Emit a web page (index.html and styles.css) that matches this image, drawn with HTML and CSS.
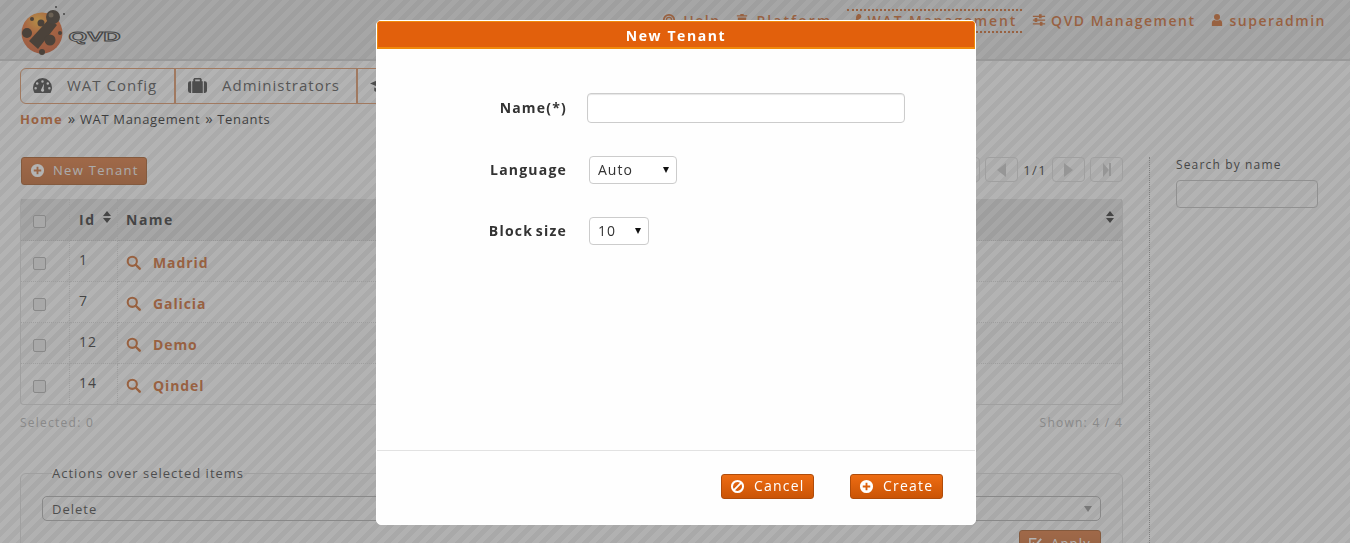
FILE: index.html
```html
<!DOCTYPE html>
<html lang="en">
<head>
  <meta charset="UTF-8" />
  <title>New Tenant</title>
  <link rel="stylesheet" href="styles.css">
</head>
<body>
  <svg class="sprites" xmlns="http://www.w3.org/2000/svg">
    <symbol id="i-plus" viewBox="0 0 16 16">
      <path fill-rule="evenodd" d="M8 1a7 7 0 1 0 0 14A7 7 0 0 0 8 1zM7 4h2v3h3v2H9v3H7V9H4V7h3z"/>
    </symbol>
    <symbol id="i-ban" viewBox="0 0 16 16">
      <path fill-rule="evenodd" d="M8 1a7 7 0 1 0 0 14A7 7 0 0 0 8 1zm0 2.200c1 0 1.900.3 2.600.8L4 10.600A4.800 4.800 0 0 1 8 3.200zm4 2.200A4.800 4.800 0 0 1 5.400 12z"/>
    </symbol>
    <symbol id="i-search" viewBox="0 0 16 16">
      <circle cx="6.700" cy="6.700" r="4.900" fill="none" stroke="currentColor" stroke-width="2.200"/>
      <path d="M10.400 10.400l4.200 4.200" stroke="currentColor" stroke-width="2.600" stroke-linecap="round"/>
    </symbol>
    <symbol id="i-sort" viewBox="0 0 10 14">
      <path d="M5 1l4 5H1zM1 8h8l-4 5z"/>
    </symbol>
    <symbol id="i-user" viewBox="0 0 14 16">
      <circle cx="7" cy="4.500" r="3.500"/>
      <path d="M1 15v-3.500C1 9.500 2.500 8 4 8c1 .8 5 .8 6 0 1.500 0 3 1.500 3 3.500V15z"/>
    </symbol>
    <symbol id="i-sliders" viewBox="0 0 16 16">
      <path d="M1 3h7V1.500h3V3h4v1.500h-4V6H8V4.500H1zM1 7.300h2V5.800h3v1.500h9v1.500H6v1.500H3V8.800H1zM1 11.600h8v-1.500h3v1.500h3v1.500h-3v1.500H9v-1.500H1z"/>
    </symbol>
    <symbol id="i-life" viewBox="0 0 16 16">
      <circle cx="8" cy="8" r="6" fill="none" stroke="currentColor" stroke-width="2"/>
      <circle cx="8" cy="8" r="3" fill="none" stroke="currentColor" stroke-width="1.500"/>
    </symbol>
    <symbol id="i-trash" viewBox="0 0 14 16">
      <path d="M5 1h4v1.500h4V4H1V2.500h4zM2 5h10l-.8 10H2.800z"/>
    </symbol>
    <symbol id="i-wrench" viewBox="0 0 12 16">
      <path d="M8 1c2 0 3 1.500 3 3S9.500 7 8 7L4 15H1.500L5 6.500C4.500 4 6 1 8 1z"/>
    </symbol>
    <symbol id="i-gauge" viewBox="0 0 18 16">
      <path fill-rule="evenodd" d="M9 1a9 9 0 0 0-9 9c0 1.800.5 3.500 1.400 5h15.200c.9-1.500 1.400-3.200 1.400-5a9 9 0 0 0-9-9zM9 3a1.200 1.200 0 1 1 0 2.400A1.200 1.200 0 0 1 9 3zM4 5a1.200 1.200 0 1 1 0 2.400A1.200 1.200 0 0 1 4 5zm10 0a1.200 1.200 0 1 1 0 2.400A1.200 1.200 0 0 1 14 5zM2.500 9.500a1.200 1.200 0 1 1 0 2.400 1.200 1.200 0 0 1 0-2.400zm13 0a1.200 1.200 0 1 1 0 2.400 1.200 1.200 0 0 1 0-2.400zM10.500 6L10 11.200a1.500 1.500 0 1 1-2 .1z"/>
    </symbol>
    <symbol id="i-case" viewBox="0 0 18 16">
      <path fill-rule="evenodd" d="M6 1h6l1 1v2h3a2 2 0 0 1 2 2v7a2 2 0 0 1-2 2H2a2 2 0 0 1-2-2V6a2 2 0 0 1 2-2h3V2zm.800 1.300V4h4.400V2.300zM3 4v11h1V4zm11 0v11h1V4z"/>
    </symbol>
    <symbol id="i-cap" viewBox="0 0 18 16">
      <path d="M9 2l9 4-9 4-9-4zM4 10l5 2 5-2v3c-2 2-8 2-10 0zM16 7.500h1V13h-1z"/>
    </symbol>
    <symbol id="i-edit" viewBox="0 0 16 16">
      <path fill="none" stroke="currentColor" stroke-width="1.500" d="M13 9v5H2V3h7"/>
      <path fill="none" stroke="currentColor" stroke-width="2" d="M5 7l3 3 6-7"/>
    </symbol>
  </svg>

  <div class="page">
    <header class="topbar">
      <svg class="logo" viewBox="0 0 104 46" xmlns="http://www.w3.org/2000/svg">
        <defs>
          <radialGradient id="bug" cx="0.4" cy="0.2" r="0.85">
            <stop offset="0" stop-color="#ffb428"/>
            <stop offset="0.4" stop-color="#e8641e"/>
            <stop offset="1" stop-color="#c84c1e"/>
          </radialGradient>
        </defs>
        <circle cx="22" cy="25" r="20.500" fill="url(#bug)"/>
        <path d="M29 11L9 33l9 8 19-24z" fill="#2e1c0c"/>
        <circle cx="33" cy="9" r="7" fill="#2c2014"/>
        <circle cx="31" cy="7" r="2.500" fill="#6e5a40"/>
        <circle cx="7" cy="25" r="5" fill="#2e1c0c"/>
        <circle cx="21" cy="15" r="3.500" fill="#2e1c0c"/>
        <circle cx="12" cy="11" r="2" fill="#2e1c0c"/>
        <circle cx="30" cy="32" r="5.500" fill="#2e1c0c"/>
        <circle cx="40" cy="25" r="2" fill="#2e1c0c"/>
        <circle cx="22" cy="44" r="3" fill="#2e1c0c"/>
        <circle cx="36" cy="-1" r="1" fill="#222"/>
        <circle cx="44" cy="6" r="1" fill="#222"/>
        <text class="logo-text" x="48.500" y="33" textLength="52" lengthAdjust="spacingAndGlyphs">QVD</text>
      </svg>
      <nav class="topnav">
        <a class="topnav-item"><svg class="icon icon-help"><use href="#i-life"/></svg>Help</a>
        <a class="topnav-item topnav-wide"><svg class="icon icon-trash"><use href="#i-trash"/></svg>Platform</a>
        <a class="topnav-item topnav-current"><svg class="icon icon-thin"><use href="#i-wrench"/></svg>WAT Management</a>
        <a class="topnav-item"><svg class="icon"><use href="#i-sliders"/></svg>QVD Management</a>
        <a class="topnav-item"><svg class="icon icon-user"><use href="#i-user"/></svg>superadmin</a>
      </nav>
    </header>

    <div class="main">
      <div class="tabs">
        <a class="tab tab-config"><svg class="tab-icon"><use href="#i-gauge"/></svg>WAT Config</a>
        <a class="tab tab-admins"><svg class="tab-icon"><use href="#i-case"/></svg>Administrators</a>
        <a class="tab tab-roles"><svg class="tab-icon"><use href="#i-cap"/></svg>Roles</a>
      </div>
      <div class="breadcrumbs">
        <a class="crumb-home">Home</a><span class="crumb-sep">»</span>WAT Management<span class="crumb-sep">»</span>Tenants
      </div>

      <div class="columns">
        <section class="content">
          <div class="toolbar">
            <button class="btn btn-new"><svg class="btn-icon"><use href="#i-plus"/></svg>New Tenant</button>
            <div class="pager">
              <span class="page-btn"></span>
              <span class="page-btn"><span class="tri tri-left"></span></span>
              <span class="page-count">1/1</span>
              <span class="page-btn"><span class="tri tri-right"></span></span>
              <span class="page-btn"><span class="tri tri-right tri-small"></span><span class="bar"></span></span>
            </div>
          </div>

          <table class="list">
            <thead>
              <tr>
                <th class="col-check"><input type="checkbox" class="check"></th>
                <th class="col-id">Id <svg class="sort"><use href="#i-sort"/></svg></th>
                <th>Name</th>
                <th class="col-end"><svg class="sort"><use href="#i-sort"/></svg></th>
              </tr>
            </thead>
            <tbody>
              <tr>
                <td class="col-check"><input type="checkbox" class="check"></td>
                <td class="col-id"><span class="id">1</span></td>
                <td colspan="2"><a class="row-link"><svg class="row-icon"><use href="#i-search"/></svg>Madrid</a></td>
              </tr>
              <tr>
                <td class="col-check"><input type="checkbox" class="check"></td>
                <td class="col-id"><span class="id">7</span></td>
                <td colspan="2"><a class="row-link"><svg class="row-icon"><use href="#i-search"/></svg>Galicia</a></td>
              </tr>
              <tr>
                <td class="col-check"><input type="checkbox" class="check"></td>
                <td class="col-id"><span class="id">12</span></td>
                <td colspan="2"><a class="row-link"><svg class="row-icon"><use href="#i-search"/></svg>Demo</a></td>
              </tr>
              <tr>
                <td class="col-check"><input type="checkbox" class="check"></td>
                <td class="col-id"><span class="id">14</span></td>
                <td colspan="2"><a class="row-link"><svg class="row-icon"><use href="#i-search"/></svg>Qindel</a></td>
              </tr>
            </tbody>
          </table>

          <div class="list-foot">
            <span>Selected: 0</span>
            <span>Shown: 4 / 4</span>
          </div>

          <fieldset class="actions">
            <legend>Actions over selected items</legend>
            <div class="fake-select"><span>Delete</span><span class="fake-arrow"></span></div>
            <div class="actions-row">
              <button class="btn btn-apply"><svg class="btn-icon"><use href="#i-edit"/></svg>Apply</button>
            </div>
          </fieldset>
        </section>

        <aside class="side">
          <label class="side-label">Search by name</label>
          <input class="side-input" type="text">
        </aside>
      </div>
    </div>
  </div>

  <div class="overlay"></div>

  <div class="modal">
    <div class="modal-title">New Tenant</div>
    <form class="modal-body">
      <div class="form-row">
        <label class="form-label">Name(*)</label>
        <input class="name-input" type="text">
      </div>
      <div class="form-row">
        <label class="form-label">Language</label>
        <span class="select-wrap lang-select">
          <select class="form-select"><option>Auto</option></select>
        </span>
      </div>
      <div class="form-row">
        <label class="form-label">Block size</label>
        <span class="select-wrap size-select">
          <select class="form-select"><option>10</option></select>
        </span>
      </div>
    </form>
    <div class="modal-foot">
      <button class="btn btn-modal"><svg class="btn-icon"><use href="#i-ban"/></svg>Cancel</button>
      <button class="btn btn-modal"><svg class="btn-icon"><use href="#i-plus"/></svg>Create</button>
    </div>
  </div>
</body>
</html>
```
FILE: styles.css
```css
* {
  box-sizing: border-box;
}
html, body {
  margin: 0;
  padding: 0;
  height: 543px;
  overflow: hidden;
}
body {
  font-family: "Open Sans", sans-serif;
  font-size: 13px;
  letter-spacing: 1px;
  color: #222;
  background-color: #fff;
  background-image: repeating-linear-gradient(135deg, #fff 0, #fff 5px, #eee 5px, #eee 10px);
}
.sprites {
  display: none;
}
.page {
  height: 543px;
  overflow: hidden;
}

/* top bar */
.topbar {
  height: 61px;
  display: flex;
  justify-content: space-between;
  background-image: repeating-linear-gradient(135deg, #e4e4e4 0, #e4e4e4 5px, #d6d6d6 5px, #d6d6d6 10px);
  border-bottom: 2px solid #c8c8c8;
}
.logo {
  width: 104px;
  height: 46px;
  margin: 8px 0 0 20px;
  overflow: visible;
}
.logo-text {
  font-family: "Liberation Sans", sans-serif;
  font-size: 13px;
  font-weight: 700;
  letter-spacing: 0;
  fill: none;
  stroke: #222;
  stroke-width: 0.8;
}
.topnav {
  display: flex;
  align-items: flex-start;
  padding: 9px 24px 0 0;
}
.topnav-item {
  display: flex;
  align-items: center;
  height: 24px;
  padding-bottom: 2px;
  margin-left: 16px;
  font-size: 14px;
  font-weight: 600;
  letter-spacing: 1.5px;
  color: #c85a18;
  white-space: nowrap;
}
.topnav-wide {
  letter-spacing: 2.1px;
}
.topnav-current {
  padding: 0 5px 2px 4px;
  margin-left: 15px;
  margin-right: -6px;
  letter-spacing: 1.85px;
  border-top: 2px dotted #c85a18;
  border-bottom: 2px dotted #c85a18;
}
.icon {
  width: 14px;
  height: 14px;
  margin-right: 5px;
  fill: currentColor;
}
.icon-help {
  margin-right: 7px;
}
.icon-trash {
  width: 12px;
  margin-right: 8px;
}
.icon-thin {
  width: 12px;
  margin-right: 4px;
}
.icon-user {
  width: 12px;
  margin-right: 6px;
}

/* tabs and breadcrumbs */
.main {
  padding: 7px 0 0 20px;
}
.tabs {
  display: flex;
  width: 500px;
  height: 36px;
  border: 1px solid #d88a58;
  border-radius: 6px;
}
.tab {
  display: flex;
  align-items: center;
  padding-bottom: 2px;
  font-size: 15px;
  letter-spacing: 1px;
  color: #444;
  border-right: 2px solid #d88a58;
}
.tab-config {
  width: 155px;
  padding-left: 12px;
}
.tab-admins {
  width: 182px;
  padding-left: 12px;
}
.tab-roles {
  padding-left: 12px;
  border-right: 0;
}
.tab-icon {
  width: 19px;
  height: 17px;
  margin-right: 15px;
  fill: #333;
}
.breadcrumbs {
  margin-top: 6px;
  height: 18px;
  line-height: 18px;
  letter-spacing: 0.65px;
  color: #111;
}
.crumb-home {
  font-weight: 700;
  letter-spacing: 1.1px;
  color: #c85a18;
}
.crumb-sep {
  margin: 0 4px 0 5px;
  font-size: 15px;
  line-height: 15px;
}

/* columns */
.columns {
  display: flex;
  margin-top: 29px;
}
.content {
  width: 1103px;
}
.side {
  margin-left: 26px;
  width: 170px;
  height: 386px;
  padding-left: 26px;
  border-left: 1px dotted #999;
  display: flex;
  flex-direction: column;
}
.side-label {
  font-size: 12px;
  line-height: 16px;
  letter-spacing: 1.15px;
  color: #222;
  margin-bottom: 7px;
}
.side-input {
  width: 142px;
  height: 28px;
  background: transparent;
  border: 1px solid #bbb;
  border-radius: 4px;
}

/* toolbar */
.toolbar {
  display: flex;
  justify-content: space-between;
  align-items: flex-start;
  height: 42px;
}
.btn {
  display: inline-flex;
  align-items: center;
  font-family: "Open Sans", sans-serif;
  font-size: 14px;
  letter-spacing: 1.2px;
  color: #fff;
  border: 1px solid #b04c0a;
  border-radius: 3px;
  background: linear-gradient(#ee6c12, #ca5406);
  padding: 0 0 2px;
}
.btn-icon {
  width: 15px;
  height: 15px;
  fill: #fff;
  color: #fff;
}
.btn-new,
.btn-apply {
  background: linear-gradient(#d86a2a, #bc5a1e);
  border-color: #a04c14;
}
.btn-new {
  margin-left: 1px;
  width: 126px;
  height: 28px;
  padding-left: 8px;
  font-size: 13px;
  letter-spacing: 1.3px;
  color: #eee;
}
.btn-new .btn-icon {
  margin-right: 8px;
}
.pager {
  display: flex;
  align-items: center;
  height: 25px;
  gap: 5px;
}
.page-btn {
  display: flex;
  align-items: center;
  justify-content: center;
  width: 33px;
  height: 25px;
  border: 1px solid #d8d8d8;
  border-radius: 4px;
}
.page-count {
  font-size: 13px;
  letter-spacing: 1.4px;
  color: #222;
}
.tri {
  width: 0;
  height: 0;
  border-top: 7px solid transparent;
  border-bottom: 7px solid transparent;
}
.tri-left {
  border-right: 9px solid #c4c4c4;
}
.tri-right {
  border-left: 9px solid #c4c4c4;
}
.tri-small {
  border-left-width: 6px;
}
.bar {
  width: 2px;
  height: 13px;
  background: #c4c4c4;
}

/* tenants table */
.list {
  width: 100%;
  border-collapse: separate;
  border-spacing: 0;
  border: 1px solid #d8d8d8;
  border-top: 0;
  border-radius: 4px;
  table-layout: fixed;
}
.list th {
  height: 42px;
  text-align: left;
  padding: 0 0 0 8px;
  font-size: 14px;
  font-weight: 700;
  letter-spacing: 1.5px;
  color: #222;
  background: rgba(0, 0, 0, 0.1);
  border-bottom: 1px dotted #c4c4c4;
}
.list td {
  height: 41px;
  padding: 3px 0 0 8px;
  border-bottom: 1px dotted #d4d4d4;
}
.list tbody tr:last-child td {
  border-bottom: 0;
  height: 40px;
}
.list tbody tr:nth-child(odd) td {
  background: rgba(0, 0, 0, 0.02);
}
.list .col-check {
  width: 49px;
  padding-left: 12px;
  border-right: 1px dotted #d4d4d4;
}
.list th.col-check {
  padding-top: 2px;
}
.list .col-id {
  width: 48px;
  padding-left: 9px;
  border-right: 1px dotted #d4d4d4;
}
.list .col-end {
  width: 24px;
  padding-left: 6px;
}
.check {
  appearance: none;
  display: block;
  margin: 1px 0 0;
  width: 13px;
  height: 13px;
  border: 1px solid #aaa;
  border-radius: 2px;
  background: #e8e8e8;
}
.sort {
  width: 10px;
  height: 14px;
  margin-left: 1px;
  fill: #222;
  vertical-align: 1px;
}
.id {
  display: block;
  position: relative;
  top: -3px;
  font-size: 14px;
  color: #222;
}
.row-link {
  display: flex;
  align-items: center;
  font-size: 14px;
  font-weight: 700;
  letter-spacing: 0.9px;
  color: #c85a18;
}
.row-icon {
  width: 15px;
  height: 15px;
  margin-right: 12px;
  color: #c85a18;
}
.list-foot {
  display: flex;
  justify-content: space-between;
  margin-top: 10px;
  height: 16px;
  line-height: 16px;
  font-size: 12px;
  letter-spacing: 1.25px;
  color: #aaa;
}

/* actions */
.actions {
  margin: 34px 0 0;
  padding: 15px 21px 0;
  height: 120px;
  border: 1px solid #d8d8d8;
  border-radius: 6px;
  background: rgba(0, 0, 0, 0.015);
}
.actions legend {
  margin-left: 10px;
  padding: 0;
  font-size: 13px;
  line-height: 16px;
  color: #333;
}
.fake-select {
  display: flex;
  justify-content: space-between;
  align-items: center;
  height: 25px;
  padding: 0 8px 0 9px;
  font-size: 13px;
  color: #333;
  border: 1px solid #aaa;
  border-radius: 5px;
}
.fake-arrow {
  width: 0;
  height: 0;
  border-left: 4px solid transparent;
  border-right: 4px solid transparent;
  border-top: 6px solid #888;
}
.actions-row {
  display: flex;
  justify-content: flex-end;
  margin-top: 9px;
}
.btn-apply {
  width: 82px;
  height: 28px;
  padding-left: 8px;
  font-size: 13px;
}
.btn-apply .btn-icon {
  margin-right: 8px;
}

/* modal on top of the dimmed page */
.overlay {
  position: fixed;
  inset: 0;
  background: rgba(103, 103, 103, 0.5);
}
.modal {
  position: fixed;
  left: 376px;
  top: 20px;
  width: 600px;
  height: 505px;
  display: flex;
  flex-direction: column;
  background: #fefefe;
  border: 1px solid #fff;
  border-radius: 5px;
  overflow: hidden;
}
.modal-title {
  height: 28px;
  line-height: 27px;
  text-align: center;
  font-size: 14px;
  font-weight: 700;
  letter-spacing: 1.6px;
  color: #fff;
  background: #e2600c;
  border-bottom: 2px solid #f08a0c;
  border-left: 1px solid #f08a0c;
  border-right: 1px solid #f08a0c;
  border-top: 1px solid #f08a0c;
}
.modal-body {
  flex: 1;
  display: flex;
  flex-direction: column;
  gap: 33px;
  padding-top: 44px;
}
.form-row {
  display: flex;
  align-items: center;
}
.form-label {
  width: 190px;
  margin-right: 20px;
  padding-bottom: 2px;
  text-align: right;
  font-size: 14px;
  font-weight: 700;
  letter-spacing: 1.2px;
  word-spacing: -2px;
  color: #333;
}
.name-input {
  width: 318px;
  height: 30px;
  background: #fff;
  border: 1px solid #ccc;
  border-radius: 4px;
  box-shadow: inset 0 1px 1px rgba(0, 0, 0, 0.1);
}
.select-wrap {
  position: relative;
  display: block;
  height: 28px;
  margin-left: 2px;
}
.select-wrap::after {
  content: "";
  position: absolute;
  top: 11px;
  right: 8px;
  width: 0;
  height: 0;
  border-left: 3px solid transparent;
  border-right: 3px solid transparent;
  border-top: 6px solid #111;
}
.form-select {
  appearance: none;
  display: block;
  width: 100%;
  height: 28px;
  padding: 0 8px 2px;
  font-family: "Open Sans", sans-serif;
  font-size: 14px;
  letter-spacing: 1px;
  color: #333;
  background: #fff;
  border: 1px solid #ccc;
  border-radius: 4px;
}
.lang-select {
  width: 88px;
}
.size-select {
  width: 60px;
}
.modal-foot {
  display: flex;
  justify-content: flex-end;
  gap: 36px;
  height: 74px;
  padding: 23px 32px 0 0;
  border-top: 1px solid #e2e2e2;
}
.btn-modal {
  width: 93px;
  height: 25px;
  padding-left: 8px;
  font-size: 14px;
}
.btn-modal .btn-icon {
  margin: 2px 9px 0 0;
}
```
